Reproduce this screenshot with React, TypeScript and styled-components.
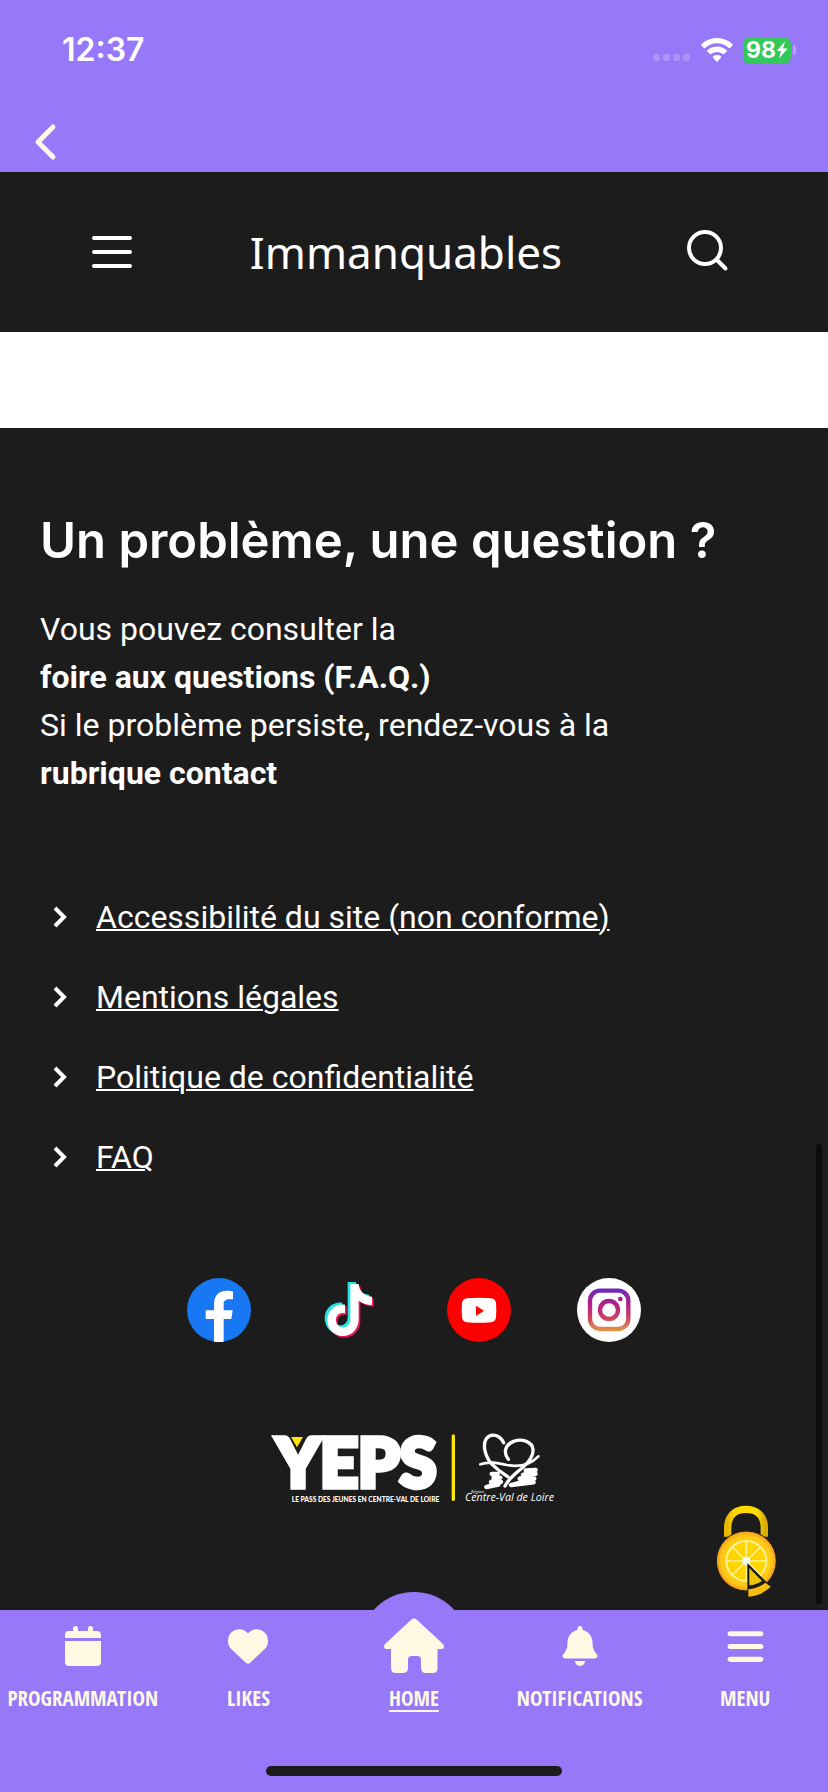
import React from "react";
import styled, { createGlobalStyle } from "styled-components";
import { FaBars, FaBell, FaHeart } from "react-icons/fa6";

const purple = "#9678f8";
const cream = "#fff9e3";
const dark = "#1c1c1c";

const GlobalStyle = createGlobalStyle`
  * { box-sizing: border-box; }
  body { margin: 0; background: ${dark}; color: #fff; font-family: Roboto, sans-serif; }
  svg { display: block; }
`;

const Page = styled.div`
  position: relative;
  display: flex;
  flex-direction: column;
  min-height: 100vh;
`;

const TopBar = styled.div`
  height: 172px;
  background: ${purple};
  display: flex;
  flex-direction: column;
  justify-content: space-between;
`;

const StatusBar = styled.div`
  display: flex;
  align-items: center;
  justify-content: space-between;
  padding: 30px 32px 0 62px;
`;

const Clock = styled.time`
  font: 600 32px/40px Inter, sans-serif;
`;

const StatusIcons = styled.div`
  display: flex;
  align-items: center;
  gap: 10px;
`;

const BackButton = styled.button`
  align-self: flex-start;
  margin: 0 0 8px 28px;
  padding: 0;
  border: 0;
  background: none;
  cursor: pointer;
`;

const Battery = styled.div`
  display: flex;
  align-items: center;
  gap: 2px;
`;

const BatteryLevel = styled.div`
  display: flex;
  align-items: center;
  justify-content: center;
  width: 48px;
  height: 27px;
  border-radius: 7px;
  background: #34c759;
  font: 700 23px/27px Inter, sans-serif;
`;

const BatteryCap = styled.span`
  width: 3px;
  height: 10px;
  border-radius: 0 3px 3px 0;
  background: #b7a2fb;
`;

const SiteHeader = styled.header`
  height: 160px;
  padding: 0 98px 0 88px;
  display: flex;
  align-items: center;
  justify-content: space-between;
  background: ${dark};
`;

const HeaderTitle = styled.h1`
  margin: 0;
  padding-right: 6px;
  font: 400 44px/60px "Noto Sans", sans-serif;
`;

const IconButton = styled.button`
  padding: 0;
  border: 0;
  background: none;
  cursor: pointer;
`;

const ContentGap = styled.main`
  height: 96px;
  background: #fff;
`;

const Footer = styled.footer`
  flex: 1;
  padding: 81px 40px 0;
  background: ${dark};
`;

const FooterTitle = styled.h2`
  margin: 0;
  font: 600 49px/64px Inter, sans-serif;
`;

const HelpText = styled.p`
  margin: 32px 0 0;
  font-size: 32px;
  line-height: 48px;
`;

const HelpLink = styled.a`
  display: block;
  width: fit-content;
  font-weight: 700;
  color: #fff;
  text-decoration: none;
`;

const LinkList = styled.ul`
  display: flex;
  flex-direction: column;
  gap: 32px;
  margin: 96px 0 0;
  padding: 0 0 0 12px;
  list-style: none;
`;

const LinkRow = styled.li`
  display: flex;
  align-items: center;
  gap: 28px;
  font-size: 32px;
  line-height: 48px;
`;

const FooterLink = styled.a`
  color: #fff;
  text-decoration: underline;
  text-decoration-thickness: 2px;
`;

const Socials = styled.div`
  display: flex;
  justify-content: center;
  gap: 66px;
  margin-top: 97px;
`;

const LogoRow = styled.div`
  display: flex;
  justify-content: center;
  margin-top: 78px;
`;

const CookieButton = styled.button`
  position: absolute;
  right: 50px;
  bottom: 194px;
  padding: 0;
  border: 0;
  background: none;
  cursor: pointer;
`;

const ScrollThumb = styled.div`
  position: absolute;
  right: 6px;
  bottom: 188px;
  width: 6px;
  height: 460px;
  border-radius: 3px;
  background: #0c0c0c;
`;

const NavBar = styled.nav`
  position: relative;
  height: 182px;
  background: ${purple};
  display: grid;
  grid-template-columns: repeat(5, 1fr);
  align-items: start;
`;

const HomeBump = styled.span`
  position: absolute;
  left: 50%;
  top: -18px;
  width: 108px;
  height: 108px;
  margin-left: -54px;
  border-radius: 50%;
  background: ${purple};
`;

const NavItem = styled.a<{ $active?: boolean }>`
  position: relative;
  display: flex;
  flex-direction: column;
  align-items: center;
  color: ${cream};
  font: 700 21px/32px "Open Sans Condensed", "Roboto Condensed", "Liberation Sans Narrow", sans-serif;
  text-decoration: ${(p) => (p.$active ? "underline" : "none")};
  text-decoration-thickness: 2px;
  text-underline-offset: 4px;
`;

const NavIcon = styled.span`
  display: flex;
  align-items: center;
  justify-content: center;
  height: 72px;
`;

const HomeIndicator = styled.div`
  position: absolute;
  left: 50%;
  bottom: 16px;
  width: 296px;
  height: 10px;
  margin-left: -148px;
  border-radius: 5px;
  background: ${dark};
`;

const SignalIcon = () => (
  <svg width="38" height="27" viewBox="0 0 38 27" fill="#ab93fa">
    {[0, 10, 20, 30].map((x) => (
      <rect key={x} x={x} y="17" width="7" height="7" rx="2" />
    ))}
  </svg>
);

const WifiIcon = () => (
  <svg width="32" height="25" viewBox="0 0 32 25" fill="#fff">
    <path d="M16 0C22 0 27.400 2.300 31.500 6.200Q32 6.800 31.500 7.400L29 10Q28.400 10.500 27.800 10A17 17 0 0 0 4.200 10Q3.600 10.500 3 10L.5 7.400Q0 6.800 .5 6.200C4.600 2.300 10 0 16 0Z" />
    <path d="M16 8.500C19.700 8.500 23.100 9.900 25.700 12.200Q26.300 12.800 25.700 13.400L23 16.100Q22.400 16.600 21.800 16.100A9 9 0 0 0 10.200 16.100Q9.600 16.600 9 16.100L6.300 13.400Q5.700 12.800 6.300 12.200C8.900 9.900 12.300 8.500 16 8.500Z" />
    <path d="M16 17C17.500 17 18.900 17.500 20 18.400Q20.500 18.900 20 19.500L16.600 23.500Q16 24.200 15.400 23.500L12 19.500Q11.500 18.900 12 18.400C13.100 17.500 14.500 17 16 17Z" />
  </svg>
);

const BoltIcon = () => (
  <svg width="12" height="18" viewBox="0 0 12 18" fill="#fff">
    <path d="M9 0.500 0.500 10H5L3 17.500 11.700 7.500H7Z" />
  </svg>
);

const ChevronRight = () => (
  <svg width="16" height="22" viewBox="0 0 16 22" fill="none" stroke="#fff" strokeWidth="4">
    <path d="M3 2 12 11 3 20" />
  </svg>
);

const FacebookIcon = () => (
  <svg width="64" height="64" viewBox="0 0 192 192">
    <circle cx="96" cy="96" r="96" fill="#1877f2" />
    <path fill="#fff" d="M81 191V123H56V97H81V78C81 53 95 38 119 38C128 38 138 40 138 40V64H126C114 64 110 71 110 79V97H137L133 123H110V191Q96 193 81 191Z" />
  </svg>
);

const tiktokNote =
  "M72 14H97C98 34 113 51 137 52V77C122 77 108 72 97 64V118C97 147 78 170 49 170C22 170 3 149 3 122C3 94 26 73 56 76V102C40 98 29 108 29 122C29 135 38 144 50 144C63 144 72 134 72 119Z";

const TikTokIcon = () => (
  <svg width="64" height="64" viewBox="0 0 192 192">
    <g transform="translate(22 0)">
      <path d={tiktokNote} fill="#f21255" transform="translate(11 9)" />
      <path d={tiktokNote} fill="#23e6df" transform="translate(-2 -2)" />
      <path d={tiktokNote} fill="#fff" transform="translate(6 4)" />
    </g>
  </svg>
);

const YouTubeIcon = () => (
  <svg width="64" height="64" viewBox="0 0 192 192">
    <circle cx="96" cy="96" r="96" fill="#f00" />
    <path fill="#fff" d="M60 61Q96 58 132 61Q146 62 147 76Q149 97 147 118Q146 132 132 133Q96 136 60 133Q46 132 45 118Q43 97 45 76Q46 62 60 61Z" />
    <path fill="#f00" d="M87 83V114L111 98Z" />
  </svg>
);

const InstagramIcon = () => (
  <svg width="64" height="64" viewBox="0 0 192 192">
    <defs>
      <linearGradient id="insta" x1="0" y1="32" x2="0" y2="160" gradientUnits="userSpaceOnUse">
        <stop offset="0" stopColor="#6a2bbd" />
        <stop offset="0.35" stopColor="#b0208c" />
        <stop offset="0.65" stopColor="#c83c68" />
        <stop offset="1" stopColor="#e39b45" />
      </linearGradient>
    </defs>
    <circle cx="96" cy="96" r="96" fill="#fff" />
    <g fill="none" stroke="url(#insta)" strokeWidth="13">
      <rect x="39" y="38" width="115" height="115" rx="30" />
      <circle cx="96" cy="96" r="27" />
    </g>
    <circle cx="130" cy="63" r="7" fill="#9a2392" />
  </svg>
);

const YepsLogo = () => (
  <svg width="310" height="100" viewBox="0 0 930 300" role="img" aria-label="YEPS">
    <g fill="#fff">
      <text x="52" y="201" fontFamily="Lato, sans-serif" fontWeight="900" fontSize="199" stroke="#fff" strokeWidth="16">
        YEPS
      </text>
      <text x="98" y="245" fontFamily="Lato, sans-serif" fontWeight="900" fontSize="20">
        LE PASS DES JEUNES EN CENTRE-VAL DE LOIRE
      </text>
      <text x="618" y="243" fontFamily='"Open Sans", sans-serif' fontStyle="italic" fontWeight="500" fontSize="32">
        Centre-Val de Loire
      </text>
      <text x="636" y="219" fontFamily='"Open Sans", sans-serif' fontStyle="italic" fontSize="13">
        Région
      </text>
    </g>
    <path d="M96 51H132L114 82Z" fill="#ffe600" />
    <rect x="578" y="43" width="10" height="200" rx="5" fill="#ffe600" />
    <g fill="none" stroke="#fff" strokeLinecap="round" strokeLinejoin="round">
      <path strokeWidth="10" d="M734 68C722 44 696 38 682 56C668 78 682 116 700 134C718 152 734 162 746 170M748 118C732 98 738 74 764 64C790 54 820 66 822 88C824 120 788 144 768 162C750 178 742 190 738 198" />
      <path strokeWidth="8" d="M664 133C690 124 712 128 744 135C780 142 812 136 838 109" />
      <path strokeWidth="13" d="M698 162H716L704 173H724L696 186H726L682 201L718 194M800 151L830 150L792 164L830 162L782 176H826L756 195L824 187" />
    </g>
  </svg>
);

const CookieIcon = () => (
  <svg width="64" height="94" viewBox="102 72 192 282">
    <defs>
      <radialGradient id="peel">
        <stop offset="0.6" stopColor="#ffd500" />
        <stop offset="0.85" stopColor="#ffc61a" />
        <stop offset="1" stopColor="#f2951c" />
      </radialGradient>
      <linearGradient id="shackle" x1="0" x2="1">
        <stop offset="0" stopColor="#e6b800" />
        <stop offset="0.2" stopColor="#ffd900" />
        <stop offset="0.8" stopColor="#ffd900" />
        <stop offset="1" stopColor="#d9ad00" />
      </linearGradient>
    </defs>
    <path d="M143 170V144C143 107 166 88 198 88C230 88 253 107 253 144V170" fill="none" stroke="url(#shackle)" strokeWidth="22" />
    <circle cx="199" cy="243" r="90" fill="url(#peel)" stroke={dark} strokeWidth="3" />
    <g fill="none" stroke="#fff19a" strokeWidth="5">
      <circle cx="199" cy="243" r="60" strokeWidth="6" />
      <path d="M139 243H259M199 183V303M157 201 241 285M241 201 157 285" />
    </g>
    <circle cx="199" cy="243" r="12" fill="#fff" />
    <path d="M202 249 272 318 262 340H202Z" fill={dark} />
    <path d="M208 264V316Q228 315 246 303Z" fill="#efc400" />
    <path d="M205 328Q234 325 256 308L272 320Q244 348 205 350Z" fill="#f8bd13" />
  </svg>
);

const CalendarIcon = () => (
  <svg width="36" height="40" viewBox="0 0 36 40" fill={cream}>
    <path d="M0 12V9Q0 5 4 5H8V2.500Q8 0 10.500 0T13 2.500V5H23V2.500Q23 0 25.500 0T28 2.500V5H32Q36 5 36 9V12ZM0 15H36V36Q36 40 32 40H4Q0 40 0 36Z" />
  </svg>
);

const HomeIcon = () => (
  <svg width="60" height="56" viewBox="0 0 60 56" fill={cream}>
    <path d="M27.500 1.500Q30 -.5 32.500 1.500L58.500 25.500Q60 27 60 28.500Q60 31 57.500 31H53.500V50Q53.500 55 49 55H42Q37 55 37 50V42Q37 38 33.500 38H27.500Q24 38 24 42V50Q24 55 19 55H12Q7 55 7 50V31H2.500Q0 31 0 28.500Q0 27 1.500 25.500Z" />
  </svg>
);

const navItems = [
  { label: "PROGRAMMATION", icon: <CalendarIcon /> },
  { label: "LIKES", icon: <FaHeart size={40} /> },
  { label: "HOME", icon: <HomeIcon />, active: true },
  { label: "NOTIFICATIONS", icon: <FaBell size={40} /> },
  { label: "MENU", icon: <FaBars size={41} /> },
];

const footerLinks = ["Accessibilité du site (non conforme)", "Mentions légales", "Politique de confidentialité", "FAQ"];

const socials = [
  { name: "Facebook", icon: <FacebookIcon /> },
  { name: "TikTok", icon: <TikTokIcon /> },
  { name: "YouTube", icon: <YouTubeIcon /> },
  { name: "Instagram", icon: <InstagramIcon /> },
];

export default function App() {
  return (
    <Page>
      <GlobalStyle />
      <TopBar>
        <StatusBar>
          <Clock>12:37</Clock>
          <StatusIcons>
            <SignalIcon />
            <WifiIcon />
            <Battery>
              <BatteryLevel>
                98
                <BoltIcon />
              </BatteryLevel>
              <BatteryCap />
            </Battery>
          </StatusIcons>
        </StatusBar>
        <BackButton aria-label="Retour">
          <svg width="36" height="44" viewBox="0 0 36 44" fill="none" stroke={cream} strokeWidth="5" strokeLinecap="round" strokeLinejoin="round">
            <path d="M25 7 10 22 25 37" />
          </svg>
        </BackButton>
      </TopBar>

      <SiteHeader>
        <IconButton aria-label="Ouvrir le menu">
          <svg width="48" height="40" viewBox="0 0 48 40" stroke="#fff" strokeWidth="4" strokeLinecap="round">
            <path d="M6 6H42M6 20H42M6 34H42" />
          </svg>
        </IconButton>
        <HeaderTitle>Immanquables</HeaderTitle>
        <IconButton aria-label="Rechercher">
          <svg width="48" height="48" viewBox="0 0 48 48" fill="none" stroke="#fff" strokeWidth="4" strokeLinecap="round">
            <circle cx="23" cy="20" r="16" />
            <path d="M34.500 31.500 43.500 40.500" />
          </svg>
        </IconButton>
      </SiteHeader>

      <ContentGap />

      <Footer>
        <FooterTitle>Un problème, une question ?</FooterTitle>
        <HelpText>
          Vous pouvez consulter la
          <HelpLink href="#faq">foire aux questions (F.A.Q.)</HelpLink>
          Si le problème persiste, rendez-vous à la
          <HelpLink href="#contact">rubrique contact</HelpLink>
        </HelpText>
        <LinkList>
          {footerLinks.map((label) => (
            <LinkRow key={label}>
              <ChevronRight />
              <FooterLink href="#">{label}</FooterLink>
            </LinkRow>
          ))}
        </LinkList>
        <Socials>
          {socials.map((s) => (
            <a key={s.name} href="#" aria-label={s.name}>
              {s.icon}
            </a>
          ))}
        </Socials>
        <LogoRow>
          <YepsLogo />
        </LogoRow>
      </Footer>

      <ScrollThumb />
      <CookieButton aria-label="Gestion des cookies">
        <CookieIcon />
      </CookieButton>

      <NavBar>
        <HomeBump />
        {navItems.map((item) => (
          <NavItem key={item.label} href="#" $active={item.active}>
            <NavIcon>{item.icon}</NavIcon>
            <span>{item.label}</span>
          </NavItem>
        ))}
        <HomeIndicator />
      </NavBar>
    </Page>
  );
}
